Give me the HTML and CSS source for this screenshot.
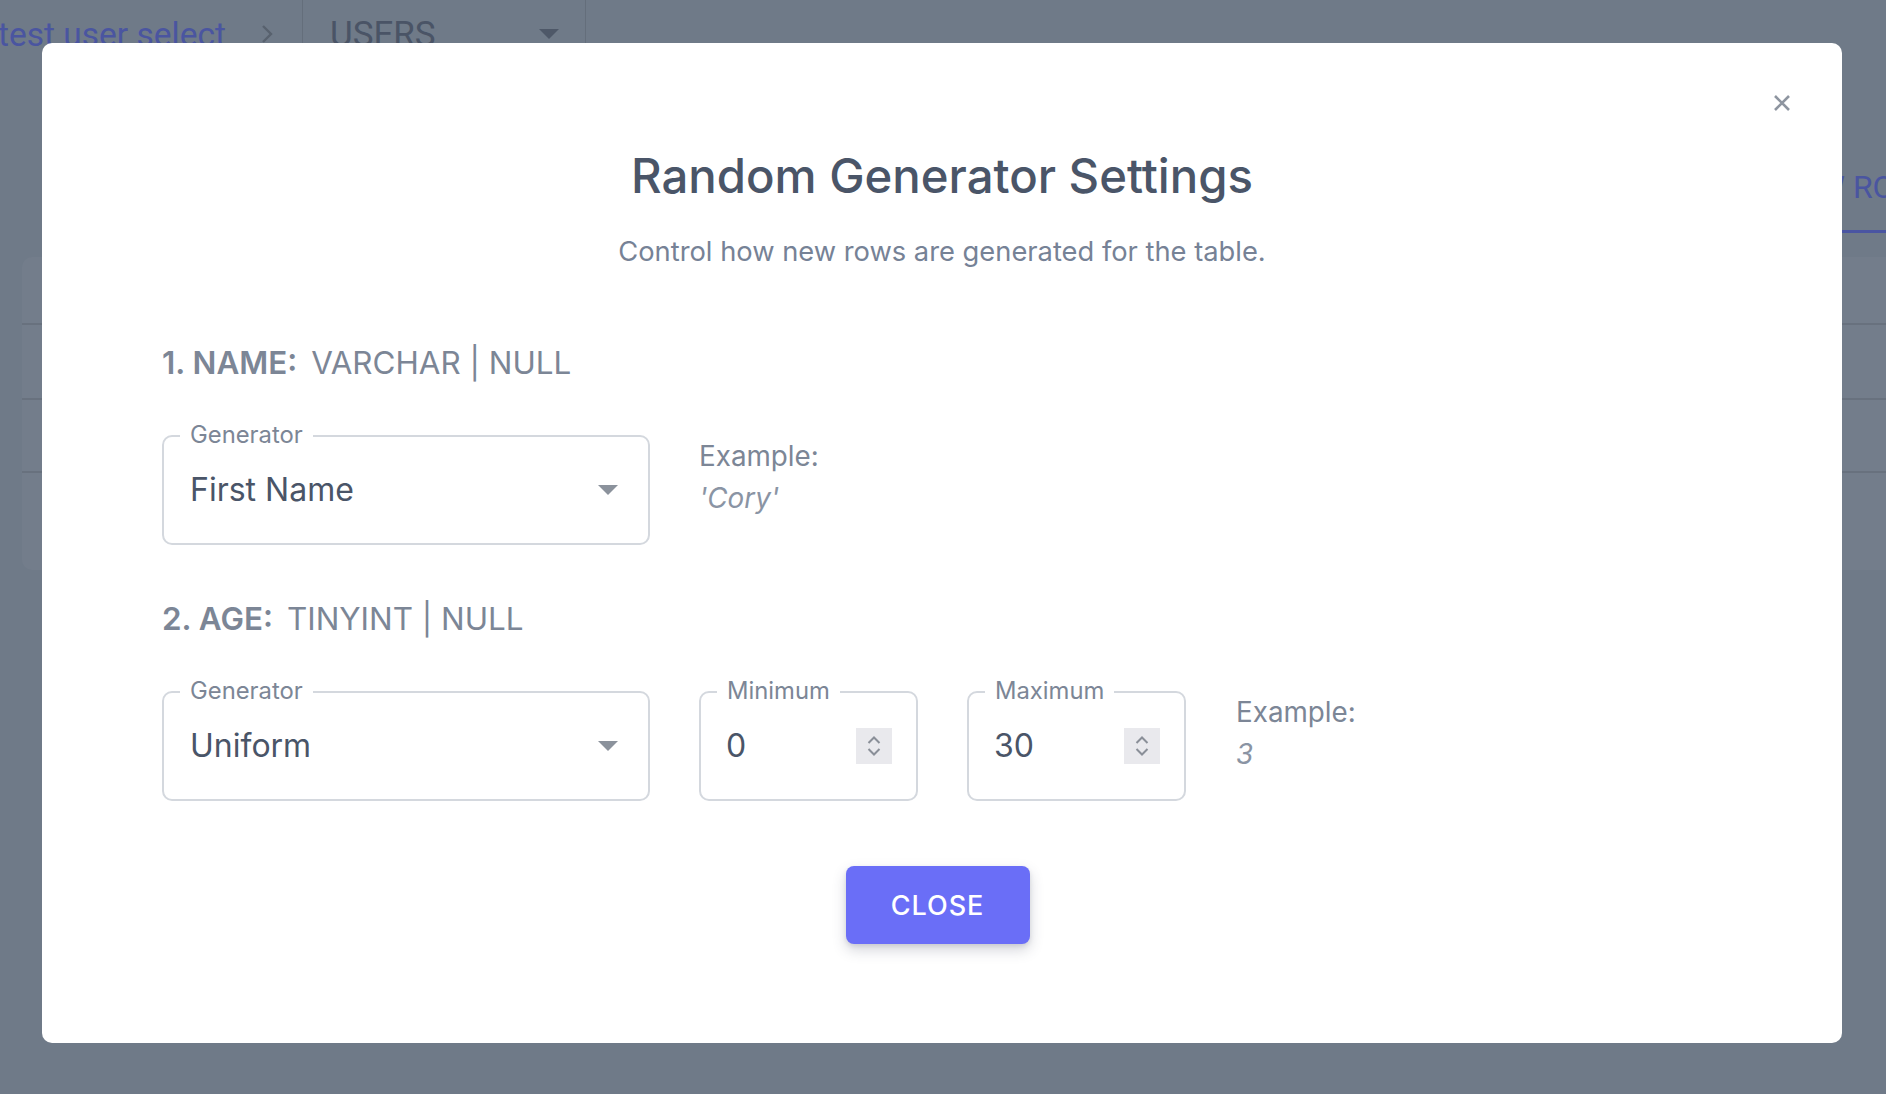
FILE: index.html
```html
<!DOCTYPE html>
<html lang="en">
<head>
<meta charset="utf-8">
<title>Random Generator Settings</title>
<link rel="stylesheet" href="styles.css">
</head>
<body>
<div class="page">
  <header class="topbar">
    <span class="crumb">test user select</span>
    <svg class="chev" viewBox="0 0 14 22"><polyline points="3,3 11,11 3,19" fill="none" stroke="#58616e" stroke-width="2.4"/></svg>
    <span class="divider"></span>
    <div class="table-select">
      <span>USERS</span>
      <svg class="tri" viewBox="0 0 20 10"><polygon points="0,0 20,0 10,10" fill="#4e5868"/></svg>
    </div>
    <span class="divider end"></span>
  </header>
  <nav class="tabs"><span class="tab">NEW ROW</span></nav>
  <div class="card">
    <div class="card-row r1"></div>
    <div class="card-row r2"></div>
    <div class="card-row r3"></div>
    <div class="card-row r4"></div>
  </div>
</div>

<div class="overlay">
  <div class="modal">
    <button class="close-x" aria-label="Close">
      <svg viewBox="0 0 18 18"><path d="M2 2 L16 16 M16 2 L2 16" stroke="#8e95a0" stroke-width="2.6" stroke-linecap="butt"/></svg>
    </button>
    <h1 class="title">Random Generator Settings</h1>
    <p class="subtitle">Control how new rows are generated for the table.</p>

    <section class="column-section">
      <h2 class="col-head"><b>1. NAME:</b>VARCHAR | NULL</h2>
      <div class="field-row">
        <div class="field field-select">
          <span class="field-label">Generator</span>
          <span class="field-value">First Name</span>
          <svg class="caret" viewBox="0 0 20 10"><polygon points="0,0 20,0 10,10" fill="#8b929c"/></svg>
        </div>
        <div class="example">
          <span class="ex-label">Example:</span>
          <span class="ex-value">'Cory'</span>
        </div>
      </div>
    </section>

    <section class="column-section second">
      <h2 class="col-head"><b>2. AGE:</b>TINYINT | NULL</h2>
      <div class="field-row">
        <div class="field field-select">
          <span class="field-label">Generator</span>
          <span class="field-value">Uniform</span>
          <svg class="caret" viewBox="0 0 20 10"><polygon points="0,0 20,0 10,10" fill="#8b929c"/></svg>
        </div>
        <div class="field field-number">
          <span class="field-label">Minimum</span>
          <span class="field-value">0</span>
          <span class="spinner"><svg viewBox="0 0 36 36"><polyline points="12.5,15 18,9.5 23.5,15" fill="none" stroke="#8a8f98" stroke-width="2"/><polyline points="12.5,21 18,26.5 23.5,21" fill="none" stroke="#8a8f98" stroke-width="2"/></svg></span>
        </div>
        <div class="field field-number">
          <span class="field-label">Maximum</span>
          <span class="field-value">30</span>
          <span class="spinner"><svg viewBox="0 0 36 36"><polyline points="12.5,15 18,9.5 23.5,15" fill="none" stroke="#8a8f98" stroke-width="2"/><polyline points="12.5,21 18,26.5 23.5,21" fill="none" stroke="#8a8f98" stroke-width="2"/></svg></span>
        </div>
        <div class="example">
          <span class="ex-label">Example:</span>
          <span class="ex-value">3</span>
        </div>
      </div>
    </section>

    <div class="actions">
      <button class="btn-close">CLOSE</button>
    </div>
  </div>
</div>
</body>
</html>
```

FILE: styles.css
```css
* { box-sizing: border-box; }
html, body { margin: 0; padding: 0; }
body {
  width: 1886px;
  height: 1094px;
  overflow: hidden;
  position: relative;
  background: #6f7a88;
  font-family: Inter, "Noto Sans", sans-serif;
}

/* ---------- background page (dimmed) ---------- */
.page {
  font-family: Roboto, "Liberation Sans", sans-serif;
  width: 1886px;
}
.topbar {
  display: flex;
  align-items: center;
  height: 68px;
  margin-left: -2px;
}
.crumb {
  font-size: 33.5px;
  color: #4a55a0;
  white-space: nowrap;
}
.chev {
  width: 14px;
  height: 22px;
  margin-left: 34px;
}
.divider {
  width: 1px;
  align-self: stretch;
  background: #646e7b;
  margin-left: 28px;
}
.divider.end { margin-left: 0; }
.table-select {
  width: 282px;
  display: flex;
  align-items: center;
  justify-content: space-between;
  padding: 0 26px 0 27px;
  font-size: 35px;
  color: #4a5466;
}
.tri { width: 20px; height: 10px; }

.tabs {
  display: flex;
  justify-content: flex-end;
  height: 165px;
  align-items: flex-end;
}
.tab {
  font-size: 32px;
  line-height: 40px;
  color: #4a55a0;
  padding: 0 24px 23px;
  border-bottom: 3px solid #4a55a2;
  margin-right: -61px;
  white-space: nowrap;
}
.card {
  margin: 24px 0 0 22px;
  width: 1900px;
  background: #737d8b;
  border-radius: 10px;
  display: flex;
  flex-direction: column;
}
.card-row { border-top: 2px solid #68717e; }
.card-row.r1 { height: 66px; border-top: none; }
.card-row.r2 { height: 75px; }
.card-row.r3 { height: 73px; }
.card-row.r4 { height: 99px; }

/* ---------- modal ---------- */
.overlay {
  position: absolute;
  inset: 0;
  display: flex;
  align-items: flex-start;
  padding: 43px 0 0 42px;
}
.modal {
  position: relative;
  width: 1800px;
  height: 1000px;
  background: #ffffff;
  border-radius: 10px;
  padding: 0 120px;
  display: flex;
  flex-direction: column;
}
.close-x {
  position: absolute;
  top: 48px;
  right: 48px;
  width: 24px;
  height: 24px;
  padding: 3px;
  border: 0;
  background: transparent;
  display: flex;
}
.close-x svg { width: 18px; height: 18px; }

.title {
  margin: 104px 0 0;
  font-size: 47.3px;
  line-height: 58px;
  font-weight: 500;
  color: #4a5568;
  text-align: center;
}
.subtitle {
  margin: 31px 0 0;
  font-size: 27.3px;
  line-height: 32px;
  color: #768296;
  text-align: center;
}

.col-head {
  margin: 75px 0 0;
  font-size: 31.4px;
  line-height: 40px;
  font-weight: 400;
  color: #7c8696;
}
.second .col-head { margin-top: 54px; }
.col-head b {
  font-weight: 600;
  margin-right: 14px;
}

.field-row {
  display: flex;
  align-items: flex-start;
  gap: 49px;
  margin-top: 52px;
}
.field {
  position: relative;
  height: 110px;
  border: 2px solid #d4d8de;
  border-radius: 10px;
  display: flex;
  align-items: center;
  color: #4a5568;
}
.field-select {
  width: 488px;
  padding: 0 30px 0 26px;
}
.field-number {
  width: 219px;
  padding: 0 24px 0 25px;
}
.field-number + .example { margin-left: 1px; }
.field-label {
  position: absolute;
  top: -14px;
  left: 16px;
  padding: 0 10px;
  background: #ffffff;
  font-size: 23.8px;
  line-height: 24px;
  color: #7c8696;
}
.field-value {
  font-size: 32px;
  line-height: 40px;
  color: #4a5568;
}
.caret {
  width: 20px;
  height: 10px;
  margin-left: auto;
}
.spinner {
  margin-left: auto;
  width: 36px;
  height: 36px;
  background: #e9e9ed;
  display: flex;
}
.spinner svg { width: 36px; height: 36px; }

.example {
  display: flex;
  flex-direction: column;
  font-size: 27.8px;
  line-height: 42px;
}
.ex-label { color: #7c8696; }
.ex-value { color: #8a94a4; font-style: italic; }

.actions {
  display: flex;
  justify-content: center;
  margin-top: 65px;
  padding-right: 9px;
}
.btn-close {
  width: 184px;
  height: 78px;
  border: 0;
  border-radius: 8px;
  background: #6a6ef7;
  color: #ffffff;
  font-family: Inter, "Noto Sans", sans-serif;
  font-size: 27px;
  font-weight: 500;
  letter-spacing: 1px;
  box-shadow: 0 6px 14px rgba(60, 64, 90, 0.22), 0 2px 4px rgba(60, 64, 90, 0.12);
}
```
